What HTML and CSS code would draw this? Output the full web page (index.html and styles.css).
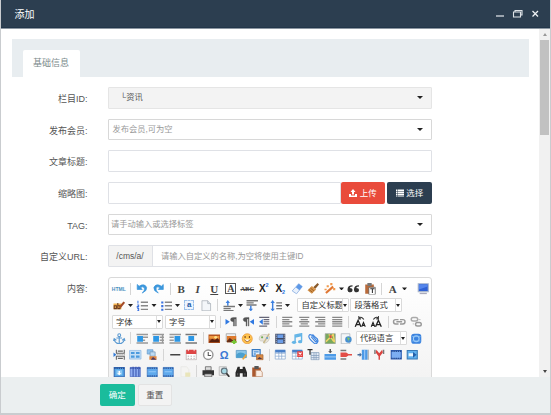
FILE: index.html
```
<!DOCTYPE html>
<html>
<head>
<meta charset="utf-8">
<title>添加</title>
<link rel="stylesheet" href="styles.css">
</head>
<body>
<svg class="defs" aria-hidden="true">
<symbol id="undo" viewBox="0 0 16 16"><path d="M1 2v7h7L5.600 6.500Q9 4 11 7q1 3-3 7 7-3 6-8Q11 0 3.600 4.500z" fill="#3c97dc" stroke="#3c97dc"/></symbol>
<symbol id="redo" viewBox="0 0 16 16"><path d="M15 2v7H8l2.400-2.500Q7 4 5 7q-1 3 3 7Q1 11 2 6q3-6 10.400-1.500z" fill="#3c97dc" stroke="#3c97dc"/></symbol>
<symbol id="eraser" viewBox="0 0 16 16"><path d="M10 1l5 4-8 10-6-4z" fill="#e9f1fc" stroke="#7aa5df"/><path d="M10 1l5 4-4 5-5-4z" fill="#5d98e6"/></symbol>
<symbol id="brush" viewBox="0 0 16 16"><path d="M14 0l2 2-5 6-3-2z" fill="#8a5a2c"/><path d="M6 4l6 5-6 6-6-5z" fill="#d6934a"/><path d="M2 9l5 4M4 7l5 4" stroke="#8a541f"/></symbol>
<symbol id="wand" viewBox="0 0 16 16"><path d="M2 14L12 5" stroke="#df7734" stroke-width="3"/><path d="M3 3h3v3H3zM8 0h3v3H8zM12 7h3v3h-3zM0 8h3v2H0z" fill="#f19a4d"/></symbol>
<symbol id="quote" viewBox="0 0 16 16"><path d="M7 3Q0 3 0 9q0 4 4 4 3 0 3-3T3 7q1-2 4-2zM16 3q-7 0-7 6 0 4 4 4 3 0 3-3t-4-3q1-2 4-2z" fill="#333"/></symbol>
<symbol id="paste" viewBox="0 0 16 16"><path d="M1 2h12v13H1z" fill="#b96b3b"/><path d="M4 0h6v4H4z" fill="#777"/><path d="M6 6h9v10H6z" fill="#fff" stroke="#555"/><path d="M8 8h6M11 8v6" stroke="#333" stroke-width="1.500"/></symbol>
<symbol id="clipboard" viewBox="0 0 16 16"><path d="M1 2h12v13H1z" fill="#aa582e"/><path d="M4 0h6v4H4z" fill="#555"/><path d="M6 6h7l2 3v6H6z" fill="#faeee5" stroke="#b98563"/></symbol>
<symbol id="screen" viewBox="0 0 16 16"><path d="M1 1h14v11H1z" fill="#2f61d5" stroke="#a9b6cc" stroke-width="1.500"/><path d="M2 2h12v3L2 9z" fill="#5485ec"/><path d="M3 14.500h10" stroke="#aab" stroke-width="2"/></symbol>
<symbol id="mark" viewBox="0 0 16 16"><path d="M0 5h11v8H0z" fill="#f3b24c"/><path d="M1 8h3v4H1zM6 4v8h3V8H6" fill="none" stroke="#6b3a20" stroke-width="1.500"/><path d="M9 10l6-7" stroke="#a44b28" stroke-width="3"/></symbol>
<symbol id="ol" viewBox="0 0 16 16"><path d="M2 1v4M1 7h2v2H1v1h2M1 12h2v3H1" fill="none" stroke="#3b73e0" stroke-width="1.400"/><path d="M6 3h10M6 8h10M6 13h10" stroke="#888" stroke-width="2"/></symbol>
<symbol id="ul" viewBox="0 0 16 16"><path d="M1 2h3v3H1zM1 7h3v3H1zM1 12h3v3H1z" fill="#3b73e0"/><path d="M6 3h10M6 8h10M6 13h10" stroke="#888" stroke-width="2"/></symbol>
<symbol id="doc" viewBox="0 0 16 16"><path d="M2 1h8l4 4v10H2z" fill="#f3f6f9" stroke="#a5abb2"/><path d="M10 1v4h4" fill="#dce2e8" stroke="#a5abb2"/></symbol>
<symbol id="ptop" viewBox="0 0 16 16"><path d="M6 0l3 4H7v4H5V4H3z" fill="#3c80e0"/><path d="M0 9h16M0 12h10M0 15h14" stroke="#777" stroke-width="2"/></symbol>
<symbol id="pbot" viewBox="0 0 16 16"><path d="M0 1h16M0 4h10M0 7h14" stroke="#777" stroke-width="2"/><path d="M6 16l3-4H7V8H5v4H3z" fill="#3c80e0"/></symbol>
<symbol id="lh" viewBox="0 0 16 16"><path d="M3 0l3 4H4v8h2l-3 4-3-4h2V4H0z" fill="#3c80e0"/><path d="M8 4h8M8 8h8M8 12h8" stroke="#777" stroke-width="2"/></symbol>
<symbol id="ltr" viewBox="0 0 16 16"><path d="M0 4l6 4-6 4z" fill="#3079e1"/><path d="M15 2H11q-4 0-4 3t4 3v6h1.500V4H14v10h1z" fill="#555" stroke="#555" stroke-width=".5"/></symbol>
<symbol id="rtl" viewBox="0 0 16 16"><path d="M16 4l-6 4 6 4z" fill="#3079e1"/><path d="M9 2H5Q1 2 1 5t4 3v6h1.300V4H8v10h1z" fill="#555" stroke="#555" stroke-width=".5"/></symbol>
<symbol id="indent" viewBox="0 0 16 16"><path d="M1 2h14M7 5h8M7 8h8M7 11h8M1 14h11" stroke="#667" stroke-width="1.600"/><path d="M1 8l5-4v8z" fill="#3079e1"/></symbol>
<symbol id="al" viewBox="0 0 16 16"><path d="M1 2h14M1 5h10M1 8h14M1 11h10M1 14h14" stroke="#888" stroke-width="1.900"/></symbol>
<symbol id="ac" viewBox="0 0 16 16"><path d="M1 2h14M3 5h10M1 8h14M3 11h10M1 14h14" stroke="#888" stroke-width="1.900"/></symbol>
<symbol id="ar" viewBox="0 0 16 16"><path d="M1 2h14M5 5h10M1 8h14M5 11h10M1 14h14" stroke="#888" stroke-width="1.900"/></symbol>
<symbol id="aj" viewBox="0 0 16 16"><path d="M1 2h14M1 5h14M1 8h14M1 11h14M1 14h14" stroke="#888" stroke-width="1.900"/></symbol>
<symbol id="case" viewBox="0 0 16 16"><path d="M1 15L5 6l4 9M2.500 12h5" fill="none" stroke="#222" stroke-width="1.900"/><path d="M10 15l2.500-6 2.500 6M11 13h3" fill="none" stroke="#222" stroke-width="1.500"/><path d="M6 3q4-3 7 2M6 0v4h3" fill="none" stroke="#333" stroke-width="1.400"/></symbol>
<symbol id="case2" viewBox="0 0 16 16"><path d="M1 15l2.500-6L6 15M2 13h3" fill="none" stroke="#222" stroke-width="1.500"/><path d="M7 15l4-9 4 9M8.500 12h5" fill="none" stroke="#222" stroke-width="1.900"/><path d="M4 5q3-5 7-2M11 0v4H8" fill="none" stroke="#333" stroke-width="1.400"/></symbol>
<symbol id="link" viewBox="0 0 16 16"><path d="M7 5H3Q0 5 0 8t3 3h4M9 5h4q3 0 3 3t-3 3H9M4 8h8" fill="none" stroke="#999" stroke-width="2"/></symbol>
<symbol id="unlink" viewBox="0 0 16 16"><rect x="1" y="2" width="9" height="5" rx="2.500" fill="none" stroke="#aaa" stroke-width="2"/><rect x="7" y="9" width="8" height="5" rx="2.500" fill="none" stroke="#999" stroke-width="2"/><path d="M3 11h2M11 5h3" stroke="#aaa"/></symbol>
<symbol id="anchor" viewBox="0 0 16 16"><circle cx="8" cy="3" r="2" fill="none" stroke="#5b9ad2" stroke-width="1.500"/><path d="M8 5v10M4 7h8M1 9q1 6 7 6t7-6M0 11l1-3 3 2M16 11l-1-3-3 2" fill="none" stroke="#5b9ad2" stroke-width="1.600"/></symbol>
<symbol id="fn" viewBox="0 0 16 16"><path d="M0 2h16M9 6h7M9 10h3M0 14h16" stroke="#999" stroke-width="2"/><path d="M1 4h8v8H1z" fill="#2c97e5"/></symbol>
<symbol id="fl" viewBox="0 0 16 16"><path d="M0 2h16M10 6h6M10 10h6M0 14h16" stroke="#999" stroke-width="2"/><path d="M1 4h8v8H1z" fill="#2c97e5"/><path d="M14 2v12" stroke="#999" stroke-width="2"/></symbol>
<symbol id="fr" viewBox="0 0 16 16"><path d="M0 2h16M0 6h6M0 10h6M0 14h16" stroke="#999" stroke-width="2"/><path d="M7 4h8v8H7z" fill="#2c97e5"/></symbol>
<symbol id="fc" viewBox="0 0 16 16"><path d="M0 2h16M0 14h16" stroke="#777" stroke-width="2"/><path d="M4 4h8v7H4z" fill="#2c97e5"/></symbol>
<symbol id="img" viewBox="0 0 16 16"><path d="M0 2h16v12H0z" fill="#b6541f"/><path d="M1 4h14v4H1z" fill="#ef983f"/><path d="M1 12l4-4 4 2 3-3 3 3v3H1z" fill="#57210f"/><circle cx="10" cy="6" r="2" fill="#ffe28a"/></symbol>
<symbol id="imgs" viewBox="0 0 16 16"><path d="M1 1h13v11H1z" fill="#eee" stroke="#999"/><path d="M2 4h13v9H2z" fill="#dd792d"/><path d="M2 11l4-4 4 3 4-2v5H2z" fill="#632d17"/><path d="M12 9v7M8.500 12.500h7" stroke="#79c637" stroke-width="3"/></symbol>
<symbol id="smile" viewBox="0 0 16 16"><circle cx="8" cy="8" r="7" fill="#ffc44e" stroke="#e79334"/><path d="M4 9q4 6 8 0" fill="#fff" stroke="#8c4820"/><path d="M5 4v3M11 4v3" stroke="#764019" stroke-width="1.500"/></symbol>
<symbol id="palette" viewBox="0 0 16 16"><path d="M1 8q0-6 8-6t6 6q-2 6-7 6-2 0-1-3-6 1-6-3z" fill="#e8e4d9" stroke="#c9c5ba"/><path d="M15 1L7 14" stroke="#c9b989" stroke-width="2"/><circle cx="5" cy="6" r="1.500" fill="#71ac55"/><circle cx="12" cy="7" r="1.500" fill="#67a0ce"/></symbol>
<symbol id="film" viewBox="0 0 16 16"><path d="M1 1h14v14H1z" fill="#3d4865"/><path d="M4 2h8v5H4zM4 9h8v5H4z" fill="#6b9de8"/><path d="M2.500 2v13M13.500 2v13" stroke="#ccd4e4" stroke-dasharray="2 1"/></symbol>
<symbol id="music" viewBox="0 0 16 16"><path d="M5 13V3l9-2v10" fill="none" stroke="#65b5e7" stroke-width="2"/><path d="M5 5l9-2" stroke="#65b5e7" stroke-width="3"/><ellipse cx="3.500" cy="13" rx="3" ry="2.300" fill="#65b5e7"/><ellipse cx="12" cy="12" rx="3" ry="2.300" fill="#65b5e7"/></symbol>
<symbol id="clip" viewBox="0 0 16 16"><path d="M5 5l6 7q2 1 2-1L6 3Q3 1 2 4t6 9q4 4 6 0t-3-7L7 2" fill="none" stroke="#4186e0" stroke-width="1.600"/></symbol>
<symbol id="map" viewBox="0 0 16 16"><path d="M1 1h14v14H1z" fill="#78a95c" stroke="#9aa29a"/><path d="M2 12L12 2l2 11M6 2l7 10" stroke="#efd369" stroke-width="2" fill="none"/><path d="M7 3h3v4H7z" fill="#d5503f"/></symbol>
<symbol id="frame" viewBox="0 0 16 16"><path d="M1 1h12v14H1z" fill="#f4f6f8" stroke="#a8b0b8"/><circle cx="11" cy="9" r="4.500" fill="#478fd0"/><path d="M9 6l4 1-2 4z" fill="#83c660"/></symbol>
<symbol id="globe" viewBox="0 0 16 16"><rect x="1" y="1" width="14" height="14" rx="4" fill="#3b83df"/><circle cx="8" cy="8" r="4" fill="none" stroke="#9fcdf8" stroke-width="1.500"/><path d="M2 5h12M2 11h12" stroke="#83bdf5"/></symbol>
<symbol id="pb" viewBox="0 0 16 16"><path d="M4 1v5h11V1M4 15v-5h11v5M6 3h7M6 13h7" fill="none" stroke="#666" stroke-width="1.500"/><path d="M5 8h11" stroke="#888" stroke-dasharray="2 1"/><path d="M0 5l4 3-4 3z" fill="#3079d6"/></symbol>
<symbol id="tpl" viewBox="0 0 16 16"><path d="M0 2h16v12H0z" fill="#c5def5" stroke="#8fb9e5"/><path d="M2 4h5v3H2zM9 4h5v3H9zM2 9h5v3H2zM9 9h5v3H9z" fill="#4b9ade"/></symbol>
<symbol id="bg" viewBox="0 0 16 16"><path d="M1 1h8v6H1z" fill="#8ec3ef" stroke="#6a9bcb"/><path d="M5 4h7v6H5z" fill="#bddaf2" stroke="#7696b6"/><path d="M4 10h10v5H4z" fill="#df843f"/><path d="M9 11l5 4H6z" fill="#4d3b65"/></symbol>
<symbol id="hr" viewBox="0 0 16 16"><path d="M1 8h14" stroke="#444" stroke-width="2"/></symbol>
<symbol id="cal" viewBox="0 0 16 16"><path d="M1 2h14v13H1z" fill="#fff" stroke="#b4a6a6"/><path d="M1 1h14v6H1z" fill="#dd4545"/><path d="M3 10h10M3 13h10" stroke="#999" stroke-dasharray="2 2"/><path d="M4 0v3M12 0v3" stroke="#fff"/></symbol>
<symbol id="clock" viewBox="0 0 16 16"><circle cx="8" cy="8" r="6.500" fill="#fff" stroke="#999" stroke-width="2"/><path d="M8 4v5h4" fill="none" stroke="#555" stroke-width="1.500"/></symbol>
<symbol id="gmap" viewBox="0 0 16 16"><path d="M1 2h14v10H1z" fill="#8bc6e8" stroke="#4e91c0"/><path d="M1 8q5-6 14 0v4H1z" fill="#4ca0cf"/><path d="M9 14l5-7 2 2-5 6z" fill="#e9a643"/></symbol>
<symbol id="snap" viewBox="0 0 16 16"><path d="M1 1h11v9H1z" fill="#e8f2fc" stroke="#3478c1" stroke-width="1.700"/><path d="M3 4h7M3 7h3" stroke="#4e93d8" stroke-width="2"/><path d="M7 8h9v7H7z" fill="#d98c47" stroke="#a86836"/><path d="M8 14l3-3 4 3z" fill="#503849"/></symbol>
<symbol id="table" viewBox="0 0 16 16"><path d="M1 2h14v12H1zM1 6h14M1 10h14M6 4v10M10 4v10" fill="#fff" stroke="#88a8d1"/><path d="M1 1h14v4H1z" fill="#477fc9"/></symbol>
<symbol id="tdel" viewBox="0 0 16 16"><use href="#table"/><path d="M8 3h8v8H8z" fill="#e54242"/><path d="M10 5l4 4M14 5l-4 4" stroke="#fff" stroke-width="1.500"/></symbol>
<symbol id="ttl" viewBox="0 0 16 16"><path d="M5 5h11v10H5zM5 9h11M5 12h11M9 5v10M12 5v10" fill="#e5edf7" stroke="#809ab8"/><path d="M0 1h7M3.500 1v7" stroke="#333" stroke-width="1.800"/></symbol>
<symbol id="irow" viewBox="0 0 16 16"><path d="M0 7h16v8H0z" fill="#4c9ae7"/><path d="M0 11h16" stroke="#c8e2fc"/><path d="M7 0h2v3h2L8 6 5 3h2z" fill="#555"/></symbol>
<symbol id="drow" viewBox="0 0 16 16"><path d="M0 2h8M0 14h8" stroke="#777" stroke-width="2"/><path d="M0 5h8l3 2h5v2h-5l-3 2H0z" fill="#e24d46"/></symbol>
<symbol id="icol" viewBox="0 0 16 16"><path d="M6 1h8v14H6z" fill="#4c9ae7"/><path d="M10 1v14" stroke="#c8e2fc"/><path d="M0 7h3V5l3 3-3 3V9H0z" fill="#456d9c"/><path d="M15 1v14" stroke="#888"/></symbol>
<symbol id="dcol" viewBox="0 0 16 16"><path d="M2 1v6M14 1v6" stroke="#777" stroke-width="2"/><path d="M4 1l4 5 4-5 1 4-4 5v5H7v-5L3 5z" fill="#db4440"/></symbol>
<symbol id="merge" viewBox="0 0 16 16"><path d="M1 2h14v12H1z" fill="#7caef2" stroke="#2e5fb5" stroke-width="1.500"/><path d="M1 3h14M1 13h14" stroke="#294e92" stroke-width="2" stroke-dasharray="2 1"/></symbol>
<symbol id="mright" viewBox="0 0 16 16"><path d="M1 2h14v12H1z" fill="#60b0ed" stroke="#3879b6" stroke-width="1.500"/><path d="M3 6h7v4H3z" fill="#edf7ff"/><path d="M9 4l5 4-5 4z" fill="#245fa8"/></symbol>
<symbol id="cell" viewBox="0 0 16 16"><path d="M1 2h14v13H1z" fill="#57a8e8" stroke="#346bb6" stroke-width="1.500"/><path d="M1 3h14" stroke="#294e92" stroke-width="2" stroke-dasharray="2 1"/><path d="M4 6h8v6H4z" fill="#8ec8f3"/><path d="M7 7h2v3h2l-3 3-3-3h2z" fill="#fff"/></symbol>
<symbol id="cols" viewBox="0 0 16 16"><path d="M1 2h14v13H1z" fill="#8eadf1" stroke="#4563bd"/><path d="M5 1v14M9 1v14M13 1v14" stroke="#3c57ae" stroke-width="1.500"/><path d="M1 3h14" stroke="#3c57ae" stroke-width="2" stroke-dasharray="2 1"/></symbol>
<symbol id="rows" viewBox="0 0 16 16"><path d="M1 2h14v13H1z" fill="#5fa9ec" stroke="#3a76c0"/><path d="M1 3h14M1 14h14" stroke="#345fa6" stroke-width="2" stroke-dasharray="2 1"/><path d="M3 8h10" stroke="#a8d7ff"/></symbol>
<symbol id="faded" viewBox="0 0 16 16"><path d="M2 1h8l3 4v10H2z" fill="#f4f4f2" stroke="#e6e6e2"/><path d="M8 9h7v6H8z" fill="#e9e5ba"/></symbol>
<symbol id="print" viewBox="0 0 16 16"><path d="M4 1h8v5H4z" fill="#ddd" stroke="#555"/><path d="M0 6h16v7H0z" fill="#333"/><path d="M3 11h10v4H3z" fill="#ccc" stroke="#555"/></symbol>
<symbol id="preview" viewBox="0 0 16 16"><path d="M1 1h10v12H1z" fill="#eee" stroke="#aaa"/><circle cx="8" cy="7" r="4" fill="#a5d8e4" stroke="#667780" stroke-width="1.700"/><path d="M11 10l4 5" stroke="#333" stroke-width="2.500"/></symbol>
<symbol id="find" viewBox="0 0 16 16"><path d="M3 1h3v3h4V1h3l3 8v6h-6v-5H6v5H0V9z" fill="#292929"/><path d="M3 10v3M13 10v3" stroke="#777"/></symbol>
</svg>

<div class="dialog">
  <header class="titlebar">
    <span>添加</span>
    <svg class="winbtns" viewBox="0 0 44 12"><path d="M0 8h8" stroke="#e6e9ed" stroke-width="1.200"/><path d="M17.500 4h7v5h-7zM19 4V2.500h7V7h-1.500" fill="none" stroke="#dfe3e8" stroke-width="1.100"/><path d="M36.500 3l5.500 5.500M42 3l-5.500 5.500" stroke="#edf0f3" stroke-width="1.300"/></svg>
  </header>
  <div class="body">
    <main class="content">
      <nav class="tabs"><span class="tab">基础信息</span></nav>
      <form class="form">
        <label>栏目ID:</label>
        <div class="field gray"><span>└资讯</span><i class="caret"></i></div>
        <label>发布会员:</label>
        <div class="field select"><span>发布会员,可为空</span><i class="caret"></i></div>
        <label>文章标题:</label>
        <div class="field"></div>
        <label>缩略图:</label>
        <div class="upload">
          <div class="field"></div>
          <span class="btn red"><svg viewBox="0 0 16 16"><path d="M8 0l5 6h-3v5H6V6H3zM0 10h4v3h8v-3h4v6H0z"/></svg><span>上传</span></span>
          <span class="btn navy"><svg viewBox="0 0 16 16"><path d="M0 1h3v3H0zM4 1h12v3H4zM0 5h3v3H0zM4 5h12v3H4zM0 9h3v3H0zM4 9h12v3H4zM0 13h3v2H0zM4 13h12v2H4z"/></svg><span>选择</span></span>
        </div>
        <label>TAG:</label>
        <div class="field tag"><span>请手动输入或选择标签</span><i class="caret"></i></div>
        <label>自定义URL:</label>
        <div class="field url"><span class="prefix">/cms/a/</span><span>请输入自定义的名称,为空将使用主键ID</span></div>
        <label>内容:</label>
        <div class="editor">
          <div class="tools">
            <b class="ic html">HTML</b><i class="sep"></i><svg class="ic"><use href="#undo"/></svg><svg class="ic"><use href="#redo"/></svg><i class="sep"></i><b class="ic serif">B</b><b class="ic serif italic">I</b><b class="ic serif under">U</b><b class="ic serif boxed"><span>A</span></b><b class="ic abc">ABC</b><b class="ic x">X<sup>2</sup></b><b class="ic x">X<sub>2</sub></b><svg class="ic"><use href="#eraser"/></svg><svg class="ic"><use href="#brush"/></svg><svg class="ic"><use href="#wand"/></svg><i class="drop"></i><svg class="ic"><use href="#quote"/></svg><svg class="ic"><use href="#paste"/></svg><i class="sep"></i><b class="ic serif">A</b><i class="drop"></i><i class="sep blank"></i><svg class="ic"><use href="#screen"/></svg>
          </div>
          <div class="tools">
            <svg class="ic"><use href="#mark"/></svg><i class="drop"></i><svg class="ic"><use href="#ol"/></svg><i class="drop"></i><svg class="ic"><use href="#ul"/></svg><i class="drop"></i><b class="ic auto"><span>a</span></b><svg class="ic"><use href="#doc"/></svg><i class="sep"></i><svg class="ic"><use href="#ptop"/></svg><i class="drop"></i><svg class="ic"><use href="#pbot"/></svg><i class="drop"></i><svg class="ic"><use href="#lh"/></svg><i class="drop"></i><i class="sep short"></i><div class="combo"><span>自定义标题</span><i></i></div><div class="combo"><span>段落格式</span><i></i></div>
          </div>
          <div class="tools">
            <div class="combo"><span>字体</span><i></i></div><div class="combo"><span>字号</span><i></i></div><i class="sep"></i><svg class="ic"><use href="#ltr"/></svg><svg class="ic"><use href="#rtl"/></svg><svg class="ic"><use href="#indent"/></svg><i class="sep"></i><svg class="ic"><use href="#al"/></svg><svg class="ic"><use href="#ac"/></svg><svg class="ic"><use href="#ar"/></svg><svg class="ic"><use href="#aj"/></svg><i class="sep"></i><svg class="ic"><use href="#case"/></svg><svg class="ic"><use href="#case2"/></svg><i class="sep"></i><svg class="ic"><use href="#link"/></svg><svg class="ic"><use href="#unlink"/></svg>
          </div>
          <div class="tools">
            <svg class="ic"><use href="#anchor"/></svg><i class="sep"></i><svg class="ic"><use href="#fn"/></svg><svg class="ic"><use href="#fl"/></svg><svg class="ic"><use href="#fr"/></svg><svg class="ic"><use href="#fc"/></svg><i class="sep"></i><svg class="ic"><use href="#img"/></svg><svg class="ic"><use href="#imgs"/></svg><svg class="ic"><use href="#smile"/></svg><svg class="ic"><use href="#palette"/></svg><svg class="ic"><use href="#film"/></svg><svg class="ic"><use href="#music"/></svg><svg class="ic"><use href="#clip"/></svg><svg class="ic"><use href="#map"/></svg><svg class="ic"><use href="#frame"/></svg><div class="combo"><span>代码语言</span><i></i></div><svg class="ic"><use href="#globe"/></svg>
          </div>
          <div class="tools">
            <svg class="ic"><use href="#pb"/></svg><svg class="ic"><use href="#tpl"/></svg><svg class="ic"><use href="#bg"/></svg><i class="sep"></i><svg class="ic"><use href="#hr"/></svg><svg class="ic"><use href="#cal"/></svg><svg class="ic"><use href="#clock"/></svg><b class="ic omega">Ω</b><svg class="ic"><use href="#gmap"/></svg><svg class="ic"><use href="#snap"/></svg><i class="sep"></i><svg class="ic"><use href="#table"/></svg><svg class="ic"><use href="#tdel"/></svg><svg class="ic"><use href="#ttl"/></svg><svg class="ic"><use href="#irow"/></svg><svg class="ic"><use href="#drow"/></svg><svg class="ic"><use href="#icol"/></svg><svg class="ic"><use href="#dcol"/></svg><svg class="ic"><use href="#merge"/></svg><svg class="ic"><use href="#mright"/></svg>
          </div>
          <div class="tools">
            <svg class="ic"><use href="#cell"/></svg><svg class="ic"><use href="#cols"/></svg><svg class="ic"><use href="#rows"/></svg><svg class="ic"><use href="#rows"/></svg><svg class="ic"><use href="#faded"/></svg><i class="sep"></i><svg class="ic"><use href="#print"/></svg><svg class="ic"><use href="#preview"/></svg><svg class="ic"><use href="#find"/></svg><svg class="ic"><use href="#clipboard"/></svg>
          </div>
        </div>
      </form>
    </main>
    <aside class="scrollbar"><i class="up"></i><div class="thumb"></div><i class="down"></i></aside>
  </div>
  <footer class="footer"><span class="ok">确定</span><span class="reset">重置</span></footer>
</div>
</body>
</html>
```
FILE: styles.css
```
* { box-sizing: border-box; }
body {
  margin: 0;
  height: 415px;
  overflow: hidden;
  background: #c9cccf;
  font: 9px/1.3 "Liberation Sans", "Noto Sans CJK SC", sans-serif;
  color: #555;
}
.defs { display: none; }
.dialog {
  width: 549px;
  height: 413px;
  margin-left: 1px;
  display: flex;
  flex-direction: column;
  background: #fff;
}
.titlebar {
  height: 29px;
  flex: none;
  display: flex;
  justify-content: space-between;
  align-items: center;
  padding: 0 10px 0 13.500px;
  background: #2c3e50;
  border-bottom: 1px solid #8c96a1;
  box-shadow: inset 0 -1px #22364a;
  color: #fff;
  font-size: 10px;
}
.winbtns { width: 44px; height: 12px; }
.body { height: 348px; flex: none; display: flex; overflow: hidden; }
.content { flex: 1; padding: 10px 10px 0 10.500px; overflow: hidden; }
.tabs {
  height: 38px;
  padding: 11px 0 0 11px;
  background: #e8edf0;
  display: flex;
}
.tab {
  width: 57px;
  height: 27px;
  background: #fff;
  border-radius: 2px 2px 0 0;
  color: #7b8a8b;
  display: flex;
  align-items: center;
  justify-content: center;
}
.form {
  display: grid;
  grid-template-columns: 76px 324.500px;
  column-gap: 20px;
  row-gap: 10.100px;
  grid-auto-rows: 21.600px;
  padding-top: 10px;
}
.form label { text-align: right; line-height: 24px; white-space: nowrap; }
.field {
  height: 21.600px;
  border: 1px solid #dfe1e6;
  border-radius: 1px;
  display: flex;
  align-items: center;
  justify-content: space-between;
  padding: 0 8px 0 4px;
  font-size: 8.250px;
  color: #999;
  white-space: nowrap;
  background: #fff;
}
.field > span:not(.prefix), .btn span { padding-top: 2px; }
.gray { background: #f3f3f3; border-color: #e5e5e5; padding-left: 12px; color: #555; }
.select, .tag { border-color: #d8d8d8; }
.tag { padding-left: 2.500px; }
.caret {
  border: 3px solid transparent;
  border-top-color: #222;
  border-bottom: 0;
}
.upload { display: flex; }
.upload .field { flex: 1; }
.btn {
  width: 44px;
  border-radius: 2px;
  color: #fff;
  display: flex;
  align-items: center;
  justify-content: center;
  gap: 2.500px;
  font-size: 8.500px;
}
.btn svg { width: 8px; height: 8px; fill: #fff; }
.red { background: #e94b3b; }
.navy { width: 45px; margin-left: 2px; background: #2c3e50; }
.url { padding-left: 0; justify-content: flex-start; }
.prefix {
  width: 44px;
  height: 100%;
  margin-right: 8.500px;
  display: flex;
  align-items: center;
  justify-content: center;
  background: #f3f3f3;
  border-right: 1px solid #dfe1e6;
  color: #555;
  font-size: 8.500px;
}
.editor {
  height: 120px;
  padding: 2.500px 0 0 2px;
  border: 1px solid #d9d9d9;
  border-radius: 3px;
  background: linear-gradient(#fff, #f3f3f3 100px);
}
.tools { height: 16.500px; display: flex; align-items: center; }
.ic {
  width: 16.500px;
  height: 11.500px;
  flex: none;
  display: flex;
  align-items: center;
  justify-content: center;
}
.sep { width: 6.500px; height: 12px; flex: none; border-left: 1px solid #d5d5d5; transform: translateX(3px); }
.blank { visibility: hidden; }
.short { width: 5px; visibility: hidden; }
.drop {
  width: 7px;
  height: 3px;
  flex: none;
  background: #222;
  clip-path: polygon(1px 0, 6px 0, 3.500px 3px);
}
.html { font-size: 5px; color: #4b8fbf; }
.serif { font: bold 11px "Liberation Serif", serif; color: #444; }
.italic { font-style: italic; }
.under { text-decoration: underline; }
.boxed span { width: 11px; height: 11px; border: 1px solid #555; font-size: 10px; line-height: 9px; text-align: center; }
.abc { font: bold 6.500px "Liberation Serif", serif; color: #444; text-decoration: line-through; }
.x { font-size: 10px; color: #222; line-height: 12px; }
.x sup, .x sub { font-size: 5.500px; line-height: 5px; color: #2b75df; }
.x sup { align-self: flex-start; }
.x sub { align-self: flex-end; }
.auto span { width: 10px; height: 10px; border: 1px dashed #9cc0ea; background: #edf5ff; color: #265ba5; font-size: 8px; line-height: 7px; text-align: center; }
.omega { font-size: 11px; color: #3b79d4; }
.combo {
  width: 51.500px;
  height: 14px;
  margin: 0 .5px 0 1px;
  flex: none;
  display: flex;
  background: #fff;
  border: 1px solid #dadada;
  border-radius: 1px;
  color: #333;
  font-size: 8.300px;
  line-height: 13px;
}
.combo span { flex: 1; overflow: hidden; white-space: nowrap; padding-left: 3.500px; }
.combo i { width: 6px; border-left: 1px solid #ddd; display: flex; align-items: center; }
.combo i::before { content: ""; border: 2px solid transparent; border-top: 3px solid #222; border-bottom: 0; }
.scrollbar {
  width: 11px;
  background: #f1f1f1;
  display: flex;
  flex-direction: column;
  align-items: center;
  padding: 4px 0;
}
.up { border: 2.500px solid transparent; border-bottom: 3px solid #999; border-top: 0; }
.thumb { width: 9px; height: 95px; margin-top: 4px; background: #c1c1c1; }
.down { margin-top: auto; border: 2.500px solid transparent; border-top: 3px solid #444; border-bottom: 0; }
.footer {
  flex: 1;
  background: #ebeff0;
  padding: 7px 0 0 99px;
  display: flex;
  gap: 3px;
}
.footer span {
  width: 34.500px;
  height: 21.500px;
  border-radius: 2px;
  display: flex;
  align-items: center;
  justify-content: center;
  padding-top: 1px;
  font-size: 8.500px;
}
.ok { background: #1abc9c; color: #fff; }
.reset { background: #f3f3f3; border: 1px solid #e3e3e3; }
```
